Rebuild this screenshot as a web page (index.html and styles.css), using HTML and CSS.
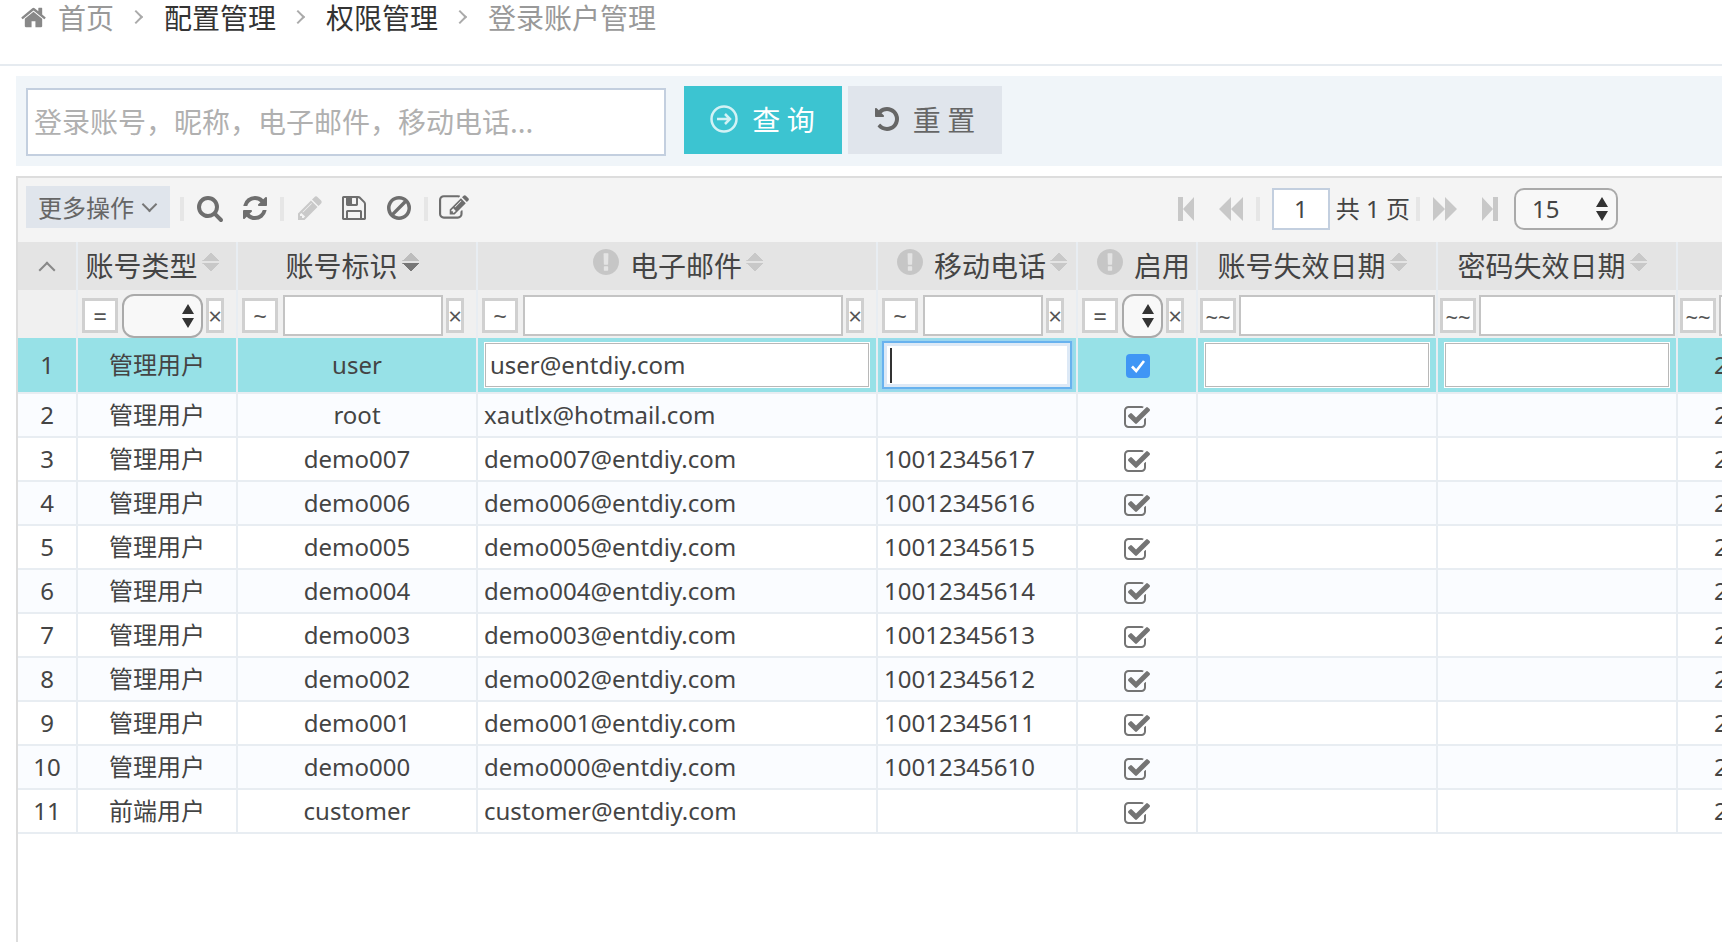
FILE: index.html
```html
<!DOCTYPE html>
<html lang="zh">
<head>
<meta charset="utf-8">
<title>登录账户管理</title>
<link rel="stylesheet" href="styles.css">
</head>
<body>
<svg class="defs" xmlns="http://www.w3.org/2000/svg">
  <symbol id="i-home" viewBox="0 0 1792 1792"><path d="M1472 992v480q0 26-19 45t-45 19h-384v-384h-256v384h-384q-26 0-45-19t-19-45v-480q0-1 .5-3t.5-3l575-474 575 474q1 2 1 6zm223-69l-62 74q-8 9-21 11h-3q-13 0-21-7l-692-577-692 577q-12 8-24 7-13-2-21-11l-62-74q-8-10-7-23.5t11-21.5l719-599q32-26 76-26t76 26l244 204v-195q0-14 9-23t23-9h192q14 0 23 9t9 23v408l219 182q10 8 11 21.5t-7 23.5z"/></symbol>
  <symbol id="i-search" viewBox="0 0 1792 1792"><path d="M1216 832q0-185-131.5-316.5t-316.5-131.5-316.5 131.5-131.5 316.5 131.5 316.5 316.5 131.5 316.5-131.5 131.5-316.5zm512 832q0 52-38 90t-90 38q-54 0-90-38l-343-342q-179 124-399 124-143 0-273.5-55.5t-225-150-150-225-55.5-273.5 55.5-273.5 150-225 225-150 273.5-55.5 273.5 55.5 225 150 150 225 55.5 273.5q0 220-124 399l343 343q37 37 37 90z"/></symbol>
  <symbol id="i-refresh" viewBox="0 0 1792 1792"><path d="M1639 1056q0 5-1 7-64 268-268 434.5t-478 166.5q-146 0-282.5-55t-243.5-157l-129 129q-19 19-45 19t-45-19-19-45v-448q0-26 19-45t45-19h448q26 0 45 19t19 45-19 45l-137 137q71 66 161 102t187 36q134 0 250-65t186-179q11-17 53-117 8-23 30-23h192q13 0 22.5 9.5t9.5 22.5zm25-800v448q0 26-19 45t-45 19h-448q-26 0-45-19t-19-45 19-45l138-138q-148-137-349-137-134 0-250 65t-186 179q-11 17-53 117-8 23-30 23h-199q-13 0-22.5-9.5t-9.5-22.5v-7q65-268 270-434.5t480-166.5q146 0 284 55.5t245 156.5l130-129q19-19 45-19t45 19 19 45z"/></symbol>
  <symbol id="i-pencil" viewBox="0 0 1792 1792"><path d="M491 1536l91-91-235-235-91 91v107h128v128h107zm523-928q0-22-22-22-10 0-17 7l-542 542q-7 7-7 17 0 22 22 22 10 0 17-7l542-542q7-7 7-17zm-54-192l416 416-832 832h-416v-416zm683 96q0 53-37 90l-166 166-416-416 166-165q36-38 90-38 53 0 91 38l235 234q37 39 37 91z"/></symbol>
  <symbol id="i-save" viewBox="0 0 1792 1792"><path d="M512 1536h768v-384h-768v384zm896 0h128v-896q0-14-10-38.5t-20-34.5l-281-281q-10-10-34-20t-39-10v416q0 40-28 68t-68 28h-576q-40 0-68-28t-28-68v-416h-128v1280h128v-416q0-40 28-68t68-28h832q40 0 68 28t28 68v416zm-384-928v-320q0-13-9.5-22.5t-22.5-9.5h-192q-13 0-22.5 9.5t-9.5 22.5v320q0 13 9.5 22.5t22.5 9.5h192q13 0 22.5-9.5t9.5-22.5zm640 32v928q0 40-28 68t-68 28h-1344q-40 0-68-28t-28-68v-1344q0-40 28-68t68-28h928q40 0 88 20t76 48l280 280q28 28 48 76t20 88z"/></symbol>
  <symbol id="i-ban" viewBox="0 0 1792 1792"><path d="M1440 893q0-161-87-295l-754 753q137 89 297 89 111 0 211.5-43.5t173.5-116.5 116-174.5 43-212.5zm-999 299l755-754q-135-91-300-91-148 0-273 73t-198 199-73 274q0 162 89 299zm1223-299q0 157-61 300t-163.5 246-245 164-298.5 61-298.5-61-245-164-163.5-246-61-300 61-299.5 163.5-245.5 245-164 298.5-61 298.5 61 245 164 163.5 245.5 61 299.5z"/></symbol>
  <symbol id="i-edit" viewBox="0 0 1792 1792"><path d="M888 1184l116-116-152-152-116 116v56h96v96h56zm440-720q-16-16-33 1l-350 350q-17 17-1 33t33-1l350-350q17-17 1-33zm80 594v190q0 119-84.5 203.5t-203.5 84.5h-832q-119 0-203.5-84.5t-84.5-203.5v-832q0-119 84.5-203.5t203.5-84.5h832q63 0 117 25 15 7 18 23 3 17-9 29l-49 49q-14 14-32 8-23-6-45-6h-832q-66 0-113 47t-47 113v832q0 66 47 113t113 47h832q66 0 113-47t47-113v-126q0-13 9-22l64-64q15-15 35-7t20 29zm-96-738l288 288-672 672h-288v-288zm444 132l-92 92-288-288 92-92q28-28 68-28t68 28l152 152q28 28 28 68t-28 68z"/></symbol>
  <symbol id="i-check" viewBox="0 0 1792 1792"><path d="M1472 930v318q0 119-84.5 203.5t-203.5 84.5h-832q-119 0-203.5-84.5t-84.5-203.5v-832q0-119 84.5-203.5t203.5-84.5h832q63 0 117 25 15 7 18 23 3 17-9 29l-49 49q-10 10-23 10-3 0-9-2-23-6-45-6h-832q-66 0-113 47t-47 113v832q0 66 47 113t113 47h832q66 0 113-47t47-113v-254q0-13 9-22l64-64q10-10 23-10 6 0 12 3 20 8 20 29zm231-489l-814 814q-24 24-57 24t-57-24l-430-430q-24-24-24-57t24-57l110-110q24-24 57-24t57 24l263 263 647-647q24-24 57-24t57 24l110 110q24 24 24 57t-24 57z"/></symbol>
  <symbol id="i-undo" viewBox="0 0 1792 1792"><path d="M1664 896q0 156-61 298t-164 245-245 164-298 61q-172 0-327-72.5t-264-204.5q-7-10-6.5-22.5t8.5-20.5l137-138q10-9 25-9 16 2 23 12 73 95 179 147t225 52q104 0 198.5-40.5t163.5-109.5 109.5-163.5 40.5-198.5-40.5-198.5-109.5-163.5-163.5-109.5-198.5-40.5q-98 0-188 35.5t-160 101.5l137 138q31 30 14 69-17 40-59 40h-448q-26 0-45-19t-19-45v-448q0-42 40-59 39-17 69 14l130 129q107-101 244.5-156.5t284.5-55.5q156 0 298 61t245 164 164 245 61 298z"/></symbol>
  <symbol id="i-warn" viewBox="128 128 1536 1536"><path d="M896 128q209 0 385.5 103t279.5 279.5 103 385.5-103 385.5-279.5 279.5-385.5 103-385.5-103-279.5-279.5-103-385.5 103-385.5 279.5-279.5 385.5-103zm128 1247v-190q0-14-9-23.5t-22-9.5h-192q-13 0-23 10t-10 23v190q0 13 10 23t23 10h192q13 0 22-9.5t9-23.5zm-2-344l18-621q0-12-10-18-10-8-24-8h-220q-14 0-24 8-10 6-10 18l17 621q0 10 10 17.5t24 7.5h185q14 0 23.5-7.5t10.5-17.5z"/></symbol>
  <symbol id="i-first" viewBox="0 0 16 24"><path d="M0 0h5v24H0zM16 0v24L5 12z"/></symbol>
  <symbol id="i-prev" viewBox="0 0 24 24"><path d="M12 0v24L0 12zM24 0v24L12 12z"/></symbol>
  <symbol id="i-next" viewBox="0 0 24 24"><path d="M0 0v24l12-12zM12 0v24l12-12z"/></symbol>
  <symbol id="i-last" viewBox="0 0 16 24"><path d="M11 0h5v24h-5zM0 0v24l11-12z"/></symbol>
  <symbol id="i-updown" viewBox="0 0 12 24"><path d="M6 0l6 10H0zM6 24L0 14h12z"/></symbol>
</svg>

<nav class="crumbs">
  <svg class="home-icon"><use href="#i-home"/></svg>
  <span class="crumb crumb-muted">首页</span>
  <span class="sep-chev"></span>
  <span class="crumb">配置管理</span>
  <span class="sep-chev"></span>
  <span class="crumb">权限管理</span>
  <span class="sep-chev"></span>
  <span class="crumb crumb-muted">登录账户管理</span>
</nav>

<form class="search-panel">
  <input class="search-input" type="text" placeholder="登录账号，昵称，电子邮件，移动电话...">
  <button class="btn btn-query" type="button">
    <svg class="go-icon" viewBox="0 0 28 28"><circle cx="14" cy="14" r="12.5"/><path d="M7 14h13M15 9l5 5-5 5"/></svg>
    <span>查 询</span>
  </button>
  <button class="btn btn-reset" type="button">
    <svg class="undo-icon"><use href="#i-undo"/></svg>
    <span>重 置</span>
  </button>
</form>

<section class="grid-box">
  <div class="toolbar">
    <button class="more-btn" type="button">更多操作<span class="more-chev"></span></button>
    <span class="tb-sep"></span>
    <svg class="tb-icon"><use href="#i-search"/></svg>
    <svg class="tb-icon tb-end"><use href="#i-refresh"/></svg>
    <span class="tb-sep"></span>
    <svg class="tb-icon tb-disabled"><use href="#i-pencil"/></svg>
    <svg class="tb-icon"><use href="#i-save"/></svg>
    <svg class="tb-icon tb-end"><use href="#i-ban"/></svg>
    <span class="tb-sep"></span>
    <svg class="tb-icon tb-wide"><use href="#i-edit"/></svg>

    <div class="pager">
      <svg class="pg-narrow"><use href="#i-first"/></svg>
      <svg class="pg-wide pg-prev"><use href="#i-prev"/></svg>
      <span class="tb-sep pg-sep"></span>
      <input class="pg-input" type="text" value="1">
      <span class="pg-total">共 1 页</span>
      <span class="tb-sep pg-sep2"></span>
      <svg class="pg-wide"><use href="#i-next"/></svg>
      <svg class="pg-narrow pg-last"><use href="#i-last"/></svg>
      <div class="pg-select"><span>15</span><svg class="updown"><use href="#i-updown"/></svg></div>
    </div>
  </div>

  <div class="table-clip">
    <table class="grid">
      <colgroup>
        <col class="c-idx"><col class="c-type"><col class="c-id"><col class="c-mail"><col class="c-phone"><col class="c-on"><col class="c-date"><col class="c-date"><col class="c-last">
      </colgroup>
      <thead>
        <tr class="head-row">
          <th><span class="up-chev"></span></th>
          <th><span class="th-in">账号类型<span class="sort"></span></span></th>
          <th><span class="th-in">账号标识<span class="sort sort-desc"></span></span></th>
          <th><span class="th-in th-mail"><svg class="warn"><use href="#i-warn"/></svg>电子邮件<span class="sort"></span></span></th>
          <th><span class="th-in th-phone"><svg class="warn"><use href="#i-warn"/></svg>移动电话<span class="sort"></span></span></th>
          <th><span class="th-in th-on"><svg class="warn"><use href="#i-warn"/></svg>启用</span></th>
          <th><span class="th-in">账号失效日期<span class="sort"></span></span></th>
          <th><span class="th-in">密码失效日期<span class="sort"></span></span></th>
          <th></th>
        </tr>
        <tr class="filter-row">
          <td></td>
          <td><div class="flt"><span class="op">=</span><div class="flt-select"><svg class="updown"><use href="#i-updown"/></svg></div><span class="clr">×</span></div></td>
          <td><div class="flt"><span class="op">~</span><span class="flt-input"></span><span class="clr">×</span></div></td>
          <td><div class="flt"><span class="op">~</span><span class="flt-input"></span><span class="clr">×</span></div></td>
          <td><div class="flt"><span class="op">~</span><span class="flt-input"></span><span class="clr">×</span></div></td>
          <td><div class="flt"><span class="op">=</span><div class="flt-select"><svg class="updown"><use href="#i-updown"/></svg></div><span class="clr">×</span></div></td>
          <td><div class="flt flt-date"><span class="op">~~</span><span class="flt-input"></span></div></td>
          <td><div class="flt flt-date"><span class="op">~~</span><span class="flt-input"></span></div></td>
          <td><div class="flt flt-date"><span class="op">~~</span><span class="flt-input"></span></div></td>
        </tr>
      </thead>
      <tbody>
        <tr class="row-sel">
          <td class="ctr">1</td><td class="ctr">管理用户</td><td class="ctr">user</td>
          <td class="edit-cell"><div class="cell-input">user@entdiy.com</div></td>
          <td class="edit-cell"><div class="cell-input cell-focus"><span class="caret"></span></div></td>
          <td class="ctr"><span class="blue-check"><svg viewBox="0 0 24 24"><path d="M6 12.5l4.2 4.5L18 7"/></svg></span></td>
          <td class="edit-cell"><div class="cell-input"></div></td>
          <td class="edit-cell"><div class="cell-input"></div></td>
          <td class="last-cell">2020</td>
        </tr>
        <tr class="row-alt"><td class="ctr">2</td><td class="ctr">管理用户</td><td class="ctr">root</td><td class="txt">xautlx@hotmail.com</td><td class="txt"></td><td class="ctr"><svg class="chk"><use href="#i-check"/></svg></td><td></td><td></td><td class="last-cell">2020</td></tr>
        <tr><td class="ctr">3</td><td class="ctr">管理用户</td><td class="ctr">demo007</td><td class="txt">demo007@entdiy.com</td><td class="txt">10012345617</td><td class="ctr"><svg class="chk"><use href="#i-check"/></svg></td><td></td><td></td><td class="last-cell">2020</td></tr>
        <tr class="row-alt"><td class="ctr">4</td><td class="ctr">管理用户</td><td class="ctr">demo006</td><td class="txt">demo006@entdiy.com</td><td class="txt">10012345616</td><td class="ctr"><svg class="chk"><use href="#i-check"/></svg></td><td></td><td></td><td class="last-cell">2020</td></tr>
        <tr><td class="ctr">5</td><td class="ctr">管理用户</td><td class="ctr">demo005</td><td class="txt">demo005@entdiy.com</td><td class="txt">10012345615</td><td class="ctr"><svg class="chk"><use href="#i-check"/></svg></td><td></td><td></td><td class="last-cell">2020</td></tr>
        <tr class="row-alt"><td class="ctr">6</td><td class="ctr">管理用户</td><td class="ctr">demo004</td><td class="txt">demo004@entdiy.com</td><td class="txt">10012345614</td><td class="ctr"><svg class="chk"><use href="#i-check"/></svg></td><td></td><td></td><td class="last-cell">2020</td></tr>
        <tr><td class="ctr">7</td><td class="ctr">管理用户</td><td class="ctr">demo003</td><td class="txt">demo003@entdiy.com</td><td class="txt">10012345613</td><td class="ctr"><svg class="chk"><use href="#i-check"/></svg></td><td></td><td></td><td class="last-cell">2020</td></tr>
        <tr class="row-alt"><td class="ctr">8</td><td class="ctr">管理用户</td><td class="ctr">demo002</td><td class="txt">demo002@entdiy.com</td><td class="txt">10012345612</td><td class="ctr"><svg class="chk"><use href="#i-check"/></svg></td><td></td><td></td><td class="last-cell">2020</td></tr>
        <tr><td class="ctr">9</td><td class="ctr">管理用户</td><td class="ctr">demo001</td><td class="txt">demo001@entdiy.com</td><td class="txt">10012345611</td><td class="ctr"><svg class="chk"><use href="#i-check"/></svg></td><td></td><td></td><td class="last-cell">2020</td></tr>
        <tr class="row-alt"><td class="ctr">10</td><td class="ctr">管理用户</td><td class="ctr">demo000</td><td class="txt">demo000@entdiy.com</td><td class="txt">10012345610</td><td class="ctr"><svg class="chk"><use href="#i-check"/></svg></td><td></td><td></td><td class="last-cell">2020</td></tr>
        <tr><td class="ctr">11</td><td class="ctr">前端用户</td><td class="ctr">customer</td><td class="txt">customer@entdiy.com</td><td class="txt"></td><td class="ctr"><svg class="chk"><use href="#i-check"/></svg></td><td></td><td></td><td class="last-cell">2020</td></tr>
      </tbody>
    </table>
  </div>
</section>
</body>
</html>
```
FILE: styles.css
```css
* { box-sizing: border-box; }
html, body { margin: 0; height: 100%; }
body {
  width: 1722px;
  height: 942px;
  overflow: hidden;
  display: flex;
  flex-direction: column;
  background: #fff;
  color: #444;
  font-family: "Noto Sans", "Noto Sans CJK SC", sans-serif;
  font-size: 24px;
}
.defs { display: none; }

/* breadcrumb */
.crumbs {
  height: 66px;
  flex: none;
  border-bottom: 2px solid #e6ebf0;
  padding: 0 0 0 20px;
  display: flex;
  align-items: flex-start;
  font-size: 28px;
  line-height: 34px;
  color: #333;
}
.home-icon { width: 27px; height: 27px; margin: 4px 11px 0 0; fill: #888; }
.crumb { font-family: "Noto Sans CJK SC", sans-serif; }
.crumb-muted { color: #999; }
.sep-chev {
  width: 10px;
  height: 10px;
  margin: 12px 23px 0 17px;
  border-top: 2px solid #aaa;
  border-right: 2px solid #aaa;
  transform: rotate(45deg);
}

/* search panel */
.search-panel {
  height: 90px;
  flex: none;
  margin: 10px 0 0 16px;
  padding: 10px;
  background: #f0f5f9;
  display: flex;
  align-items: flex-start;
}
.search-input {
  width: 640px;
  height: 68px;
  margin: 2px 18px 0 0;
  padding: 0 6px 2px;
  border: 2px solid #c3cfdf;
  background: #fff;
  outline: none;
  font-family: "Noto Sans CJK SC", sans-serif;
  font-size: 28px;
  font-weight: 400;
  color: #444;
}
.search-input::placeholder { color: #b0b0b0; opacity: 1; }
.btn {
  height: 68px;
  border: 0;
  display: flex;
  align-items: center;
  justify-content: center;
  font-family: "Noto Sans CJK SC", sans-serif;
  font-size: 28px;
  font-weight: 400;
  padding: 0 0 2px;
}
.btn-query { width: 158px; background: #3cc4d1; color: #fff; gap: 14px; padding-right: 1px; }
.btn-reset { width: 154px; margin-left: 6px; background: #e0e5ec; color: #666; gap: 12px; padding-right: 2px; }
.go-icon { width: 28px; height: 28px; fill: none; stroke: #d3f2f5; stroke-width: 2.5; }
.undo-icon { width: 28px; height: 28px; fill: #666; }

/* grid box */
.grid-box {
  flex: 1;
  min-height: 0;
  margin: 10px 0 0 16px;
  border-top: 2px solid #ddd;
  border-left: 2px solid #ddd;
  display: flex;
  flex-direction: column;
}
.toolbar {
  height: 64px;
  flex: none;
  background: #f4f4f4;
  display: flex;
  align-items: center;
  padding: 0 104px 3px 8px;
}
.more-btn {
  width: 144px;
  height: 42px;
  margin: -3px 10px 0 0;
  border: 0;
  padding: 0 0 2px 12px;
  background: #e0e5ec;
  color: #666;
  display: flex;
  align-items: center;
  font-family: "Noto Sans CJK SC", sans-serif;
  font-size: 24px;
  font-weight: 400;
}
.more-chev {
  width: 11px;
  height: 11px;
  margin: -4px 0 0 10px;
  border-right: 2px solid #777;
  border-bottom: 2px solid #777;
  transform: rotate(45deg);
}
.tb-sep { width: 4px; height: 24px; margin-right: 12px; background: #e6e6e6; flex: none; }
.tb-icon { width: 28px; height: 28px; fill: #6e6e6e; margin: -2px 17px 0 0; flex: none; }
.tb-end { margin-right: 11px; }
.tb-disabled { fill: #c9c9c9; margin-right: 16px; }
.tb-wide { width: 30px; height: 30px; margin: -2px 0 0 -1px; }

.pager { margin-left: auto; display: flex; align-items: center; }
.pg-narrow { width: 16px; height: 24px; fill: #c8c8c8; flex: none; }
.pg-wide { width: 24px; height: 24px; fill: #c8c8c8; flex: none; }
.pg-prev { margin-left: 25px; }
.pg-sep { margin: 0 12px 0 13px; }
.pg-sep2 { margin: 0 13px 0 6px; }
.pg-last { margin-left: 25px; }
.pg-input {
  width: 58px;
  height: 42px;
  border: 2px solid #c3cfdf;
  background: #fff;
  text-align: center;
  font: inherit;
  color: #444;
  padding: 0;
  outline: none;
}
.pg-total { margin-left: 6px; white-space: pre; font-size: 24px; line-height: 32px; }
.pg-select {
  width: 104px;
  height: 42px;
  margin-left: 16px;
  border: 2px solid #aaa;
  border-radius: 10px;
  background: #f8f8f8;
  display: flex;
  align-items: center;
  justify-content: space-between;
  padding: 0 8px 0 16px;
}
.updown { width: 12px; height: 24px; fill: #333; flex: none; }

/* table */
.table-clip { flex: 1; overflow: hidden; min-height: 0; }
.grid {
  table-layout: fixed;
  width: 1980px;
  border-collapse: separate;
  border-spacing: 0;
}
.c-idx { width: 60px; }
.c-type { width: 160px; }
.c-id { width: 240px; }
.c-mail { width: 400px; }
.c-phone { width: 200px; }
.c-on { width: 120px; }
.c-date { width: 240px; }
.c-last { width: 320px; }

th, td {
  padding: 0;
  border-right: 2px solid #e8edf2;
  border-bottom: 2px solid #e8edf2;
  white-space: nowrap;
  overflow: hidden;
}
.head-row th {
  height: 48px;
  background: #e4e4e4;
  border-bottom: 0;
  font-family: "Noto Sans CJK SC", sans-serif;
  font-size: 28px;
  font-weight: 400;
  color: #444;
  text-align: center;
  vertical-align: top;
}
.th-in { display: inline-flex; align-items: center; height: 46px; line-height: 46px; vertical-align: top; }
.th-mail { margin-left: 2px; }
.th-phone { margin-left: 9px; }
.th-on { margin-left: 3px; }
.sort {
  width: 17px;
  height: 18px;
  margin: -7px 10px 0 4px;
  flex: none;
  background:
    linear-gradient(to bottom right, transparent 49%, #c8c8c8 50%) left top / 9px 8px no-repeat,
    linear-gradient(to bottom left, transparent 49%, #c8c8c8 50%) right top / 8px 8px no-repeat,
    linear-gradient(to top right, transparent 49%, #c8c8c8 50%) left bottom / 9px 8px no-repeat,
    linear-gradient(to top left, transparent 49%, #c8c8c8 50%) right bottom / 8px 8px no-repeat;
}
.sort-desc {
  background:
    linear-gradient(to bottom right, transparent 49%, #bdbdbd 50%) left top / 9px 8px no-repeat,
    linear-gradient(to bottom left, transparent 49%, #bdbdbd 50%) right top / 8px 8px no-repeat,
    linear-gradient(to top right, transparent 49%, #777 50%) left bottom / 9px 8px no-repeat,
    linear-gradient(to top left, transparent 49%, #777 50%) right bottom / 8px 8px no-repeat;
}
.warn { width: 26px; height: 26px; fill: #c6c6c6; margin: -6px 11px 0 10px; flex: none; }
.up-chev {
  display: inline-block;
  width: 12px;
  height: 12px;
  margin-top: 22px;
  border-top: 2px solid #888;
  border-left: 2px solid #888;
  transform: rotate(45deg);
}

.filter-row td { height: 48px; background: #f0f0f0; border-bottom: 0; }
.flt { display: flex; align-items: center; height: 48px; padding: 3px 0 0 4px; }
.flt-date { gap: 3px; padding-left: 2px; }
.op, .clr {
  height: 35px;
  flex: none;
  border: 3px solid #d0d0d0;
  background: #fff;
  display: flex;
  align-items: center;
  justify-content: center;
  font-size: 24px;
  line-height: 1;
  color: #555;
}
.op { width: 36px; }
.clr { width: 18px; margin: 0 12px 0 4px; font-size: 24px; }
.flt-date .op { width: 36px; font-size: 22px; }
.flt-input {
  flex: 1;
  min-width: 0;
  height: 41px;
  margin: 0 -1px 0 5px;
  border: 2px solid #c4c4c4;
  background: #fff;
  display: block;
}
.flt-date .flt-input { margin: 0 1px 0 0; }
.flt-select {
  flex: 1;
  min-width: 0;
  height: 44px;
  margin: 0 -1px 0 4px;
  border: 2px solid #aaa;
  border-radius: 12px;
  background: #f8f8f8;
  display: flex;
  align-items: center;
  justify-content: flex-end;
  padding-right: 7px;
}

tbody td { height: 44px; background: #fff; line-height: 40px; color: #444; }
.row-alt td { background: #fafcff; }
.ctr { text-align: center; }
.txt { padding-left: 6px; }
.last-cell { padding-left: 36px; }
.row-sel td { height: 56px; background: #97e1e7; line-height: 52px; }
.edit-cell { padding: 0 7px; }
.cell-input {
  height: 44px;
  border: 1px solid #b8b8b8;
  outline: 1px solid #fff;
  background: #fff;
  line-height: 42px;
  padding-left: 4px;
  color: #444;
}
.cell-focus {
  display: flex;
  align-items: center;
  margin: 0 -1px;
  border: 3px solid #dde9f6;
  outline: 0;
  padding-left: 3px;
  box-shadow: 0 0 0 2px #68b2ee, 0 0 3px 3px #9ccef4;
}
.caret { width: 2px; height: 35px; background: #333; }
.blue-check {
  display: inline-flex;
  width: 24px;
  height: 24px;
  margin: -4px 0 0 2px;
  vertical-align: middle;
  border-radius: 4px;
  background: #3f96f5;
}
.blue-check svg { width: 24px; height: 24px; fill: none; stroke: #fff; stroke-width: 2.6; }
.chk { width: 28px; height: 28px; fill: #747474; vertical-align: middle; margin-top: 1px; }
```
